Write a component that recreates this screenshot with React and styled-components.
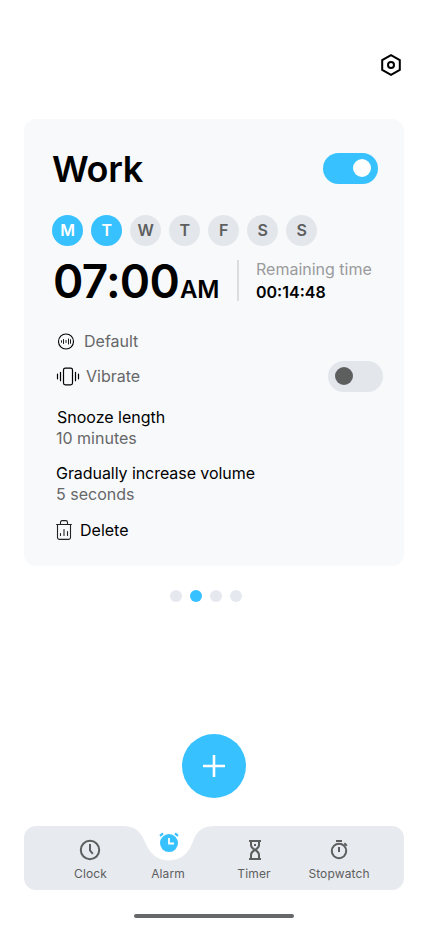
import React from "react";
import styled, { createGlobalStyle } from "styled-components";

const GlobalStyle = createGlobalStyle`
  *, *::before, *::after { box-sizing: border-box; }
  body { margin: 0; background: #fff; }
`;

const Screen = styled.div`
  width: 428px;
  height: 926px;
  display: flex;
  flex-direction: column;
  overflow: hidden;
  background: #fff;
  color: #000;
  font-family: Inter, "Liberation Sans", sans-serif;
`;

const Header = styled.header`
  display: flex;
  justify-content: flex-end;
  padding: 53px 25px 0 0;
  height: 119px;
`;

const IconButton = styled.button`
  display: block;
  width: 24px;
  height: 24px;
  padding: 0;
  border: 0;
  background: none;
`;

const Card = styled.section`
  display: flex;
  flex-direction: column;
  width: 380px;
  height: 447px;
  margin: 0 24px;
  padding: 34px 21px 0 28px;
  border-radius: 12px;
  background: #f8f9fb;
`;

const TitleRow = styled.div`
  display: flex;
  align-items: center;
  justify-content: space-between;
  height: 31px;
  padding-right: 5px;
`;

const Title = styled.h1`
  margin: 1px 0 0;
  font-size: 36px;
  line-height: 31px;
  font-weight: 600;
  letter-spacing: -0.35px;
`;

const Toggle = styled.button`
  display: flex;
  align-items: center;
  justify-content: ${({ $on }) => ($on ? "flex-end" : "flex-start")};
  width: 55px;
  height: 31px;
  padding: 0 7px 1px;
  border: 0;
  border-radius: 16px;
  background: ${({ $on }) => ($on ? "#38c1ff" : "#e3e6eb")};
`;

const Knob = styled.span`
  width: 18px;
  height: 18px;
  border-radius: 50%;
  background: ${({ $on }) => ($on ? "#fff" : "#5d5e5e")};
`;

const Days = styled.div`
  display: flex;
  gap: 8px;
  margin-top: 31px;
`;

const Day = styled.span`
  width: 31px;
  height: 31px;
  padding-left: 0.5px;
  border-radius: 50%;
  background: ${({ $on }) => ($on ? "#38c1ff" : "#e3e6eb")};
  color: ${({ $on }) => ($on ? "#fff" : "#5d5e5e")};
  font-size: 16px;
  line-height: 31px;
  font-weight: 600;
  text-align: center;
`;

const TimeRow = styled.div`
  display: flex;
  height: 41px;
  margin-top: 14px;
`;

const Time = styled.div`
  width: 185px;
  padding-left: 1px;
  font-size: 46px;
  line-height: 42px;
  font-weight: 600;
  letter-spacing: -0.75px;
  white-space: nowrap;
`;

const Meridiem = styled.span`
  margin-left: 1px;
  font-size: 24px;
  letter-spacing: -0.3px;
`;

const Remaining = styled.div`
  height: 41px;
  padding-left: 17px;
  border-left: 2px solid #dcddde;
  font-size: 16px;
  line-height: 23px;
  color: #9a9b9c;
  white-space: nowrap;
`;

const RemainingLabel = styled.div`
  margin-top: -2px;
`;

const Countdown = styled.div`
  color: #000;
  font-weight: 600;
`;

const Option = styled.div`
  display: flex;
  align-items: center;
  height: ${({ $height }) => $height}px;
  margin-top: ${({ $top }) => $top}px;
  padding-left: ${({ $left }) => $left}px;
  gap: ${({ $gap }) => $gap}px;
  color: ${({ $strong }) => ($strong ? "#000" : "#666768")};
  font-size: 16px;
  line-height: 20px;

  svg { flex: none; }
  ${Toggle} { margin-left: auto; }
`;

const OptionLabel = styled.span`
  margin-bottom: 1px;
`;

const Setting = styled.div`
  margin-top: ${({ $top }) => $top}px;
  padding-left: 4px;
  font-size: 16px;
  line-height: 21px;
`;

const SettingName = styled.div`
  padding-left: ${({ $inset }) => $inset || 0}px;
  letter-spacing: ${({ $tight }) => ($tight ? "-0.06px" : "0")};
`;

const SettingValue = styled.div`
  color: #666768;
`;

const Pager = styled.div`
  display: flex;
  gap: 8px;
  margin: 24px 0 0 170px;
`;

const Dot = styled.span`
  width: 12px;
  height: 12px;
  border-radius: 50%;
  background: ${({ $on }) => ($on ? "#38c1ff" : "#e5e9ef")};
`;

const AddButton = styled.button`
  display: flex;
  align-items: center;
  justify-content: center;
  align-self: center;
  width: 64px;
  height: 64px;
  margin-top: 132px;
  padding: 0;
  border: 0;
  border-radius: 50%;
  background: #38c1ff;
`;

const NavBar = styled.nav`
  position: relative;
  display: flex;
  width: 380px;
  height: 64px;
  margin: 28px 24px 0;
  padding-left: 28px;
  border-radius: 12px;
  background: #e7eaef;
`;

const Notch = styled.svg`
  position: absolute;
  top: 0;
  left: 96px;
`;

const NavItem = styled.a`
  position: relative;
  display: flex;
  flex-direction: column;
  align-items: center;
  width: ${({ $width }) => $width}px;
  padding-top: ${({ $active }) => ($active ? 5 : 12)}px;
  color: #5d5e5e;
  font-size: 12px;
  line-height: 16px;
  letter-spacing: 0.12px;

  svg {
    display: block;
    flex: none;
    margin-left: ${({ $shift }) => $shift || 0}px;
  }
`;

const NavLabel = styled.span`
  margin-top: ${({ $active }) => ($active ? 11 : 4)}px;
`;

const HomeIndicator = styled.div`
  align-self: center;
  width: 160px;
  height: 4px;
  margin-top: 24px;
  border-radius: 2px;
  background: #666768;
`;

const SettingsIcon = () => (
  <svg width="24" height="24" viewBox="0 0 24 24" fill="none" stroke="#000" strokeWidth="2">
    <path d="M12 2.1 20.8 7.1V16.9L12 21.9 3.2 16.9V7.1Z" />
    <circle cx="12" cy="12" r="3" />
  </svg>
);

const SoundIcon = () => (
  <svg width="18" height="18" viewBox="0 -0.5 18 18" fill="none" stroke="#000" strokeLinecap="round">
    <circle cx="9" cy="9" r="7.5" strokeWidth="1.1" />
    <path strokeWidth="0.9" d="M4.5 8.3V9.7M6.5 7V11M9 8V10M11.5 6.5V11.5M13.5 7.2V10.8" />
  </svg>
);

const VibrateIcon = () => (
  <svg width="24" height="20" viewBox="0 0.5 24 20" fill="none" stroke="#000" strokeWidth="1.2" strokeLinecap="round">
    <rect x="7.5" y="1.6" width="9" height="16.8" rx="1.8" />
    <path d="M4.5 5.8V14.2M1.5 7.7V12.3M19.5 5.8V14.2M22.5 7.7V12.3" />
  </svg>
);

const DeleteIcon = () => (
  <svg width="16" height="20" viewBox="0 0 16 20" fill="none" stroke="#222" strokeWidth="1.1" strokeLinecap="round" strokeLinejoin="round">
    <path d="M.6 4.5H15.4M4.5 4.5V2.5Q4.5.6 6.2.6H9.8Q11.5.6 11.5 2.5V4.5M1.5 4.5V17.5Q1.5 19.4 3.3 19.4H12.7Q14.5 19.4 14.5 17.5V4.5M4.5 13.5V15.5M8 9.5V15.5M11.5 11.5V15.5" />
  </svg>
);

const PlusIcon = () => (
  <svg width="22" height="22" viewBox="0 0 22 22" stroke="#fff" strokeWidth="2.6">
    <path d="M11 0V22M0 11H22" />
  </svg>
);

const ClockIcon = () => (
  <svg width="24" height="24" viewBox="0 0 24 24" fill="none" stroke="#5d5e5e" strokeWidth="2">
    <circle cx="12" cy="12" r="9.2" />
    <path d="M12 6V12.5L14.8 15.8" />
  </svg>
);

const AlarmIcon = () => (
  <svg width="24" height="24" viewBox="0 0 24 24" fill="none">
    <circle cx="12" cy="12.1" r="9" fill="#38c1ff" />
    <path d="M3 4.8 6 2.4M21 4.8 18 2.4" stroke="#38c1ff" strokeWidth="2.2" />
    <path d="M12 7V12.5H17" stroke="#fff" strokeWidth="1.8" />
  </svg>
);

const TimerIcon = () => (
  <svg width="24" height="24" viewBox="0 0 24 24" fill="none" stroke="#5d5e5e" strokeWidth="2">
    <path d="M6 3H18M6 21H18" />
    <path d="M8 3V7C8 9.8 10 10.6 12 12C14 10.6 16 9.8 16 7V3M8 21V17C8 14 10 13.4 12 12C14 13.4 16 14 16 17V21" />
    <path d="M11 7H13" />
  </svg>
);

const StopwatchIcon = () => (
  <svg width="24" height="24" viewBox="0 0 24 24" fill="none" stroke="#5d5e5e" strokeWidth="2">
    <circle cx="12" cy="13" r="7.2" />
    <path d="M9 3H15M12 9V14M17.3 5.3 19.8 7.8" />
  </svg>
);

const days = ["M", "T", "W", "T", "F", "S", "S"];

const tabs = [
  { label: "Clock", Icon: ClockIcon, width: 77, shift: -1 },
  { label: "Alarm", Icon: AlarmIcon, width: 78, shift: 2, active: true },
  { label: "Timer", Icon: TimerIcon, width: 94, shift: 2 },
  { label: "Stopwatch", Icon: StopwatchIcon, width: 76 },
];

export default function App() {
  return (
    <>
      <GlobalStyle />
      <Screen>
        <Header>
          <IconButton aria-label="Settings"><SettingsIcon /></IconButton>
        </Header>
        <Card>
          <TitleRow>
            <Title>Work</Title>
            <Toggle $on aria-label="Alarm enabled"><Knob $on /></Toggle>
          </TitleRow>
          <Days>
            {days.map((day, i) => <Day key={i} $on={i < 2}>{day}</Day>)}
          </Days>
          <TimeRow>
            <Time>07:00<Meridiem>AM</Meridiem></Time>
            <Remaining>
              <RemainingLabel>Remaining time</RemainingLabel>
              <Countdown>00:14:48</Countdown>
            </Remaining>
          </TimeRow>
          <Option $height={20} $top={30} $left={5} $gap={9}>
            <SoundIcon />Default
          </Option>
          <Option $height={31} $top={10} $left={4} $gap={6}>
            <VibrateIcon /><OptionLabel>Vibrate</OptionLabel>
            <Toggle aria-label="Vibrate"><Knob /></Toggle>
          </Option>
          <Setting $top={15}>
            <SettingName $inset={1}>Snooze length</SettingName>
            <SettingValue>10 minutes</SettingValue>
          </Setting>
          <Setting $top={14}>
            <SettingName $tight>Gradually increase volume</SettingName>
            <SettingValue>5 seconds</SettingValue>
          </Setting>
          <Option $height={20} $top={15} $left={4} $gap={8} $strong>
            <DeleteIcon />Delete
          </Option>
        </Card>
        <Pager>
          {[0, 1, 2, 3].map((i) => <Dot key={i} $on={i === 1} />)}
        </Pager>
        <AddButton aria-label="Add alarm"><PlusIcon /></AddButton>
        <NavBar>
          <Notch width="96" height="36" viewBox="0 0 96 36">
            <path fill="#fff" d="M3 0H94C83 0 77 5 73.5 14C69.5 26 62 34.5 48.5 34.5C36 34.5 29 26 24.5 15C20.5 5 14 0 3 0Z" />
          </Notch>
          {tabs.map(({ label, Icon, width, shift, active }) => (
            <NavItem key={label} $width={width} $shift={shift} $active={active}>
              <Icon />
              <NavLabel $active={active}>{label}</NavLabel>
            </NavItem>
          ))}
        </NavBar>
        <HomeIndicator />
      </Screen>
    </>
  );
}
